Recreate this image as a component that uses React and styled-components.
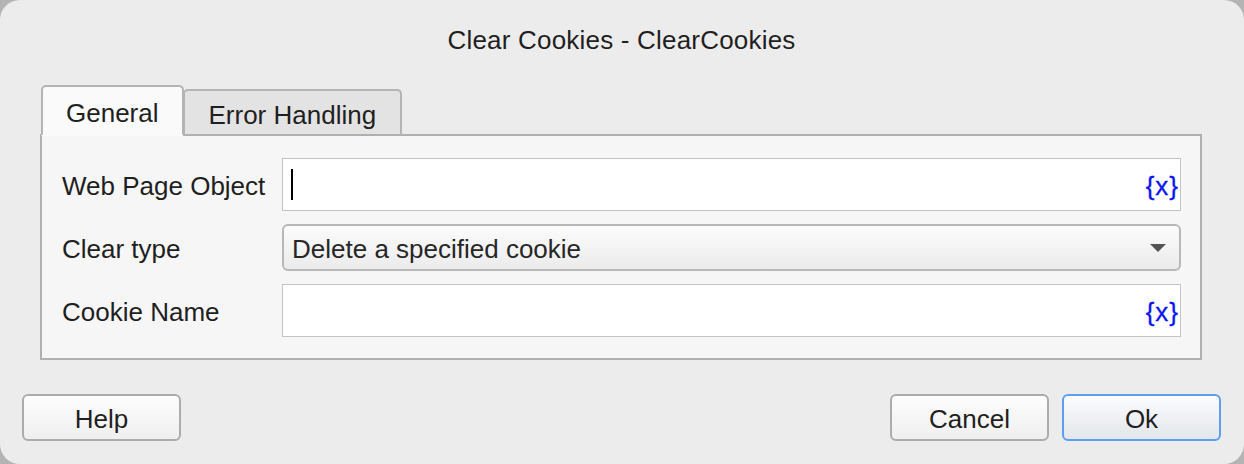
import styled, { createGlobalStyle } from "styled-components";

const GlobalStyle = createGlobalStyle`
  html, body {
    margin: 0;
    padding: 0;
    background: #b4b4b4;
  }
  body {
    font-family: "Liberation Sans", Arial, sans-serif;
    color: #1f1f1f;
  }
`;

export default function App() {
  return (
    <>
      <GlobalStyle />
      <Dialog>
        <Title>Clear Cookies - ClearCookies</Title>

        <TabArea>
          <TabBar>
            <Tab $active>General</Tab>
            <Tab>Error Handling</Tab>
          </TabBar>

          <Panel>
            <Label>Web Page Object</Label>
            <TextField>
              <Caret />
              <VarButton>{"{x}"}</VarButton>
            </TextField>

            <Label>Clear type</Label>
            <Select>
              <span>Delete a specified cookie</span>
              <Arrow />
            </Select>

            <Label>Cookie Name</Label>
            <TextField>
              <VarButton>{"{x}"}</VarButton>
            </TextField>
          </Panel>
        </TabArea>

        <Footer>
          <Button>Help</Button>
          <ButtonGroup>
            <Button>Cancel</Button>
            <Button $primary>Ok</Button>
          </ButtonGroup>
        </Footer>
      </Dialog>
    </>
  );
}

const Dialog = styled.div`
  width: 1244px;
  height: 464px;
  box-sizing: border-box;
  background: #ececec;
  border-radius: 20px;
  padding: 0 23px 23px 22px;
  display: flex;
  flex-direction: column;
  overflow: hidden;
`;

const Title = styled.div`
  font-size: 26px;
  line-height: 30px;
  padding-top: 25px;
  text-align: center;
  letter-spacing: 0.2px;
  color: #1f1f1f;
`;

const TabArea = styled.div`
  margin: 30px 19px 0 18px;
  display: flex;
  flex-direction: column;
`;

const TabBar = styled.div`
  display: flex;
  align-items: flex-end;
  padding-left: 1px;
  margin-bottom: -2px;
  position: relative;
  z-index: 1;
`;

const Tab = styled.div`
  box-sizing: border-box;
  height: ${(p) => (p.$active ? "51px" : "47px")};
  padding: 0 ${(p) => (p.$active ? "23px" : "24px")};
  font-size: 26px;
  line-height: ${(p) => (p.$active ? "53px" : "49px")};
  color: #1f1f1f;
  background: ${(p) => (p.$active ? "#fafafa" : "#e3e3e3")};
  border: 2px solid #b4b4b4;
  border-bottom: ${(p) => (p.$active ? "2px solid #fafafa" : "2px solid #b0b0b0")};
  border-radius: 5px 5px 0 0;
  margin-left: ${(p) => (p.$active ? "0" : "-1px")};
`;

const Panel = styled.div`
  background: #f6f6f6;
  border: 2px solid #b0b0b0;
  padding: 22px 19px 21px 20px;
  display: grid;
  grid-template-columns: 220px 1fr;
  row-gap: 13px;
  align-items: center;
`;

const Label = styled.div`
  font-size: 26px;
  padding-top: 4px;
  color: #1f1f1f;
`;

const TextField = styled.div`
  box-sizing: border-box;
  height: 53px;
  background: #fff;
  border: 1.5px solid #c4c4c4;
  display: flex;
  align-items: center;
  padding: 0 1px 0 8px;
`;

const Caret = styled.div`
  width: 2px;
  height: 31px;
  background: #000;
`;

const VarButton = styled.span`
  margin-left: auto;
  padding-top: 3px;
  font-size: 26px;
  color: #0a14f5;
  letter-spacing: 1px;
  -webkit-text-stroke: 0.3px #0a14f5;
`;

const Select = styled.div`
  box-sizing: border-box;
  height: 47px;
  border: 2px solid #b8b8b8;
  border-radius: 6px;
  background: linear-gradient(#fcfcfc, #ebebeb);
  display: flex;
  align-items: center;
  justify-content: space-between;
  padding: 4px 13px 0 8px;
  font-size: 26px;
  color: #262626;
`;

const Arrow = styled.div`
  width: 0;
  height: 0;
  margin-top: -4px;
  border-left: 8px solid transparent;
  border-right: 8px solid transparent;
  border-top: 8px solid #555;
`;

const Footer = styled.div`
  margin-top: auto;
  display: flex;
  justify-content: space-between;
  align-items: flex-end;
`;

const ButtonGroup = styled.div`
  display: flex;
  gap: 13px;
`;

const Button = styled.div`
  box-sizing: border-box;
  width: 159px;
  height: 47px;
  border-radius: 6px;
  border: 2px solid ${(p) => (p.$primary ? "#5d9fee" : "#acacac")};
  background: ${(p) =>
    p.$primary
      ? "linear-gradient(#fbfcfe, #e3e6ea)"
      : "linear-gradient(#fdfdfd, #efefef)"};
  font-size: 26px;
  line-height: 47px;
  text-align: center;
  color: #1f1f1f;
`;
